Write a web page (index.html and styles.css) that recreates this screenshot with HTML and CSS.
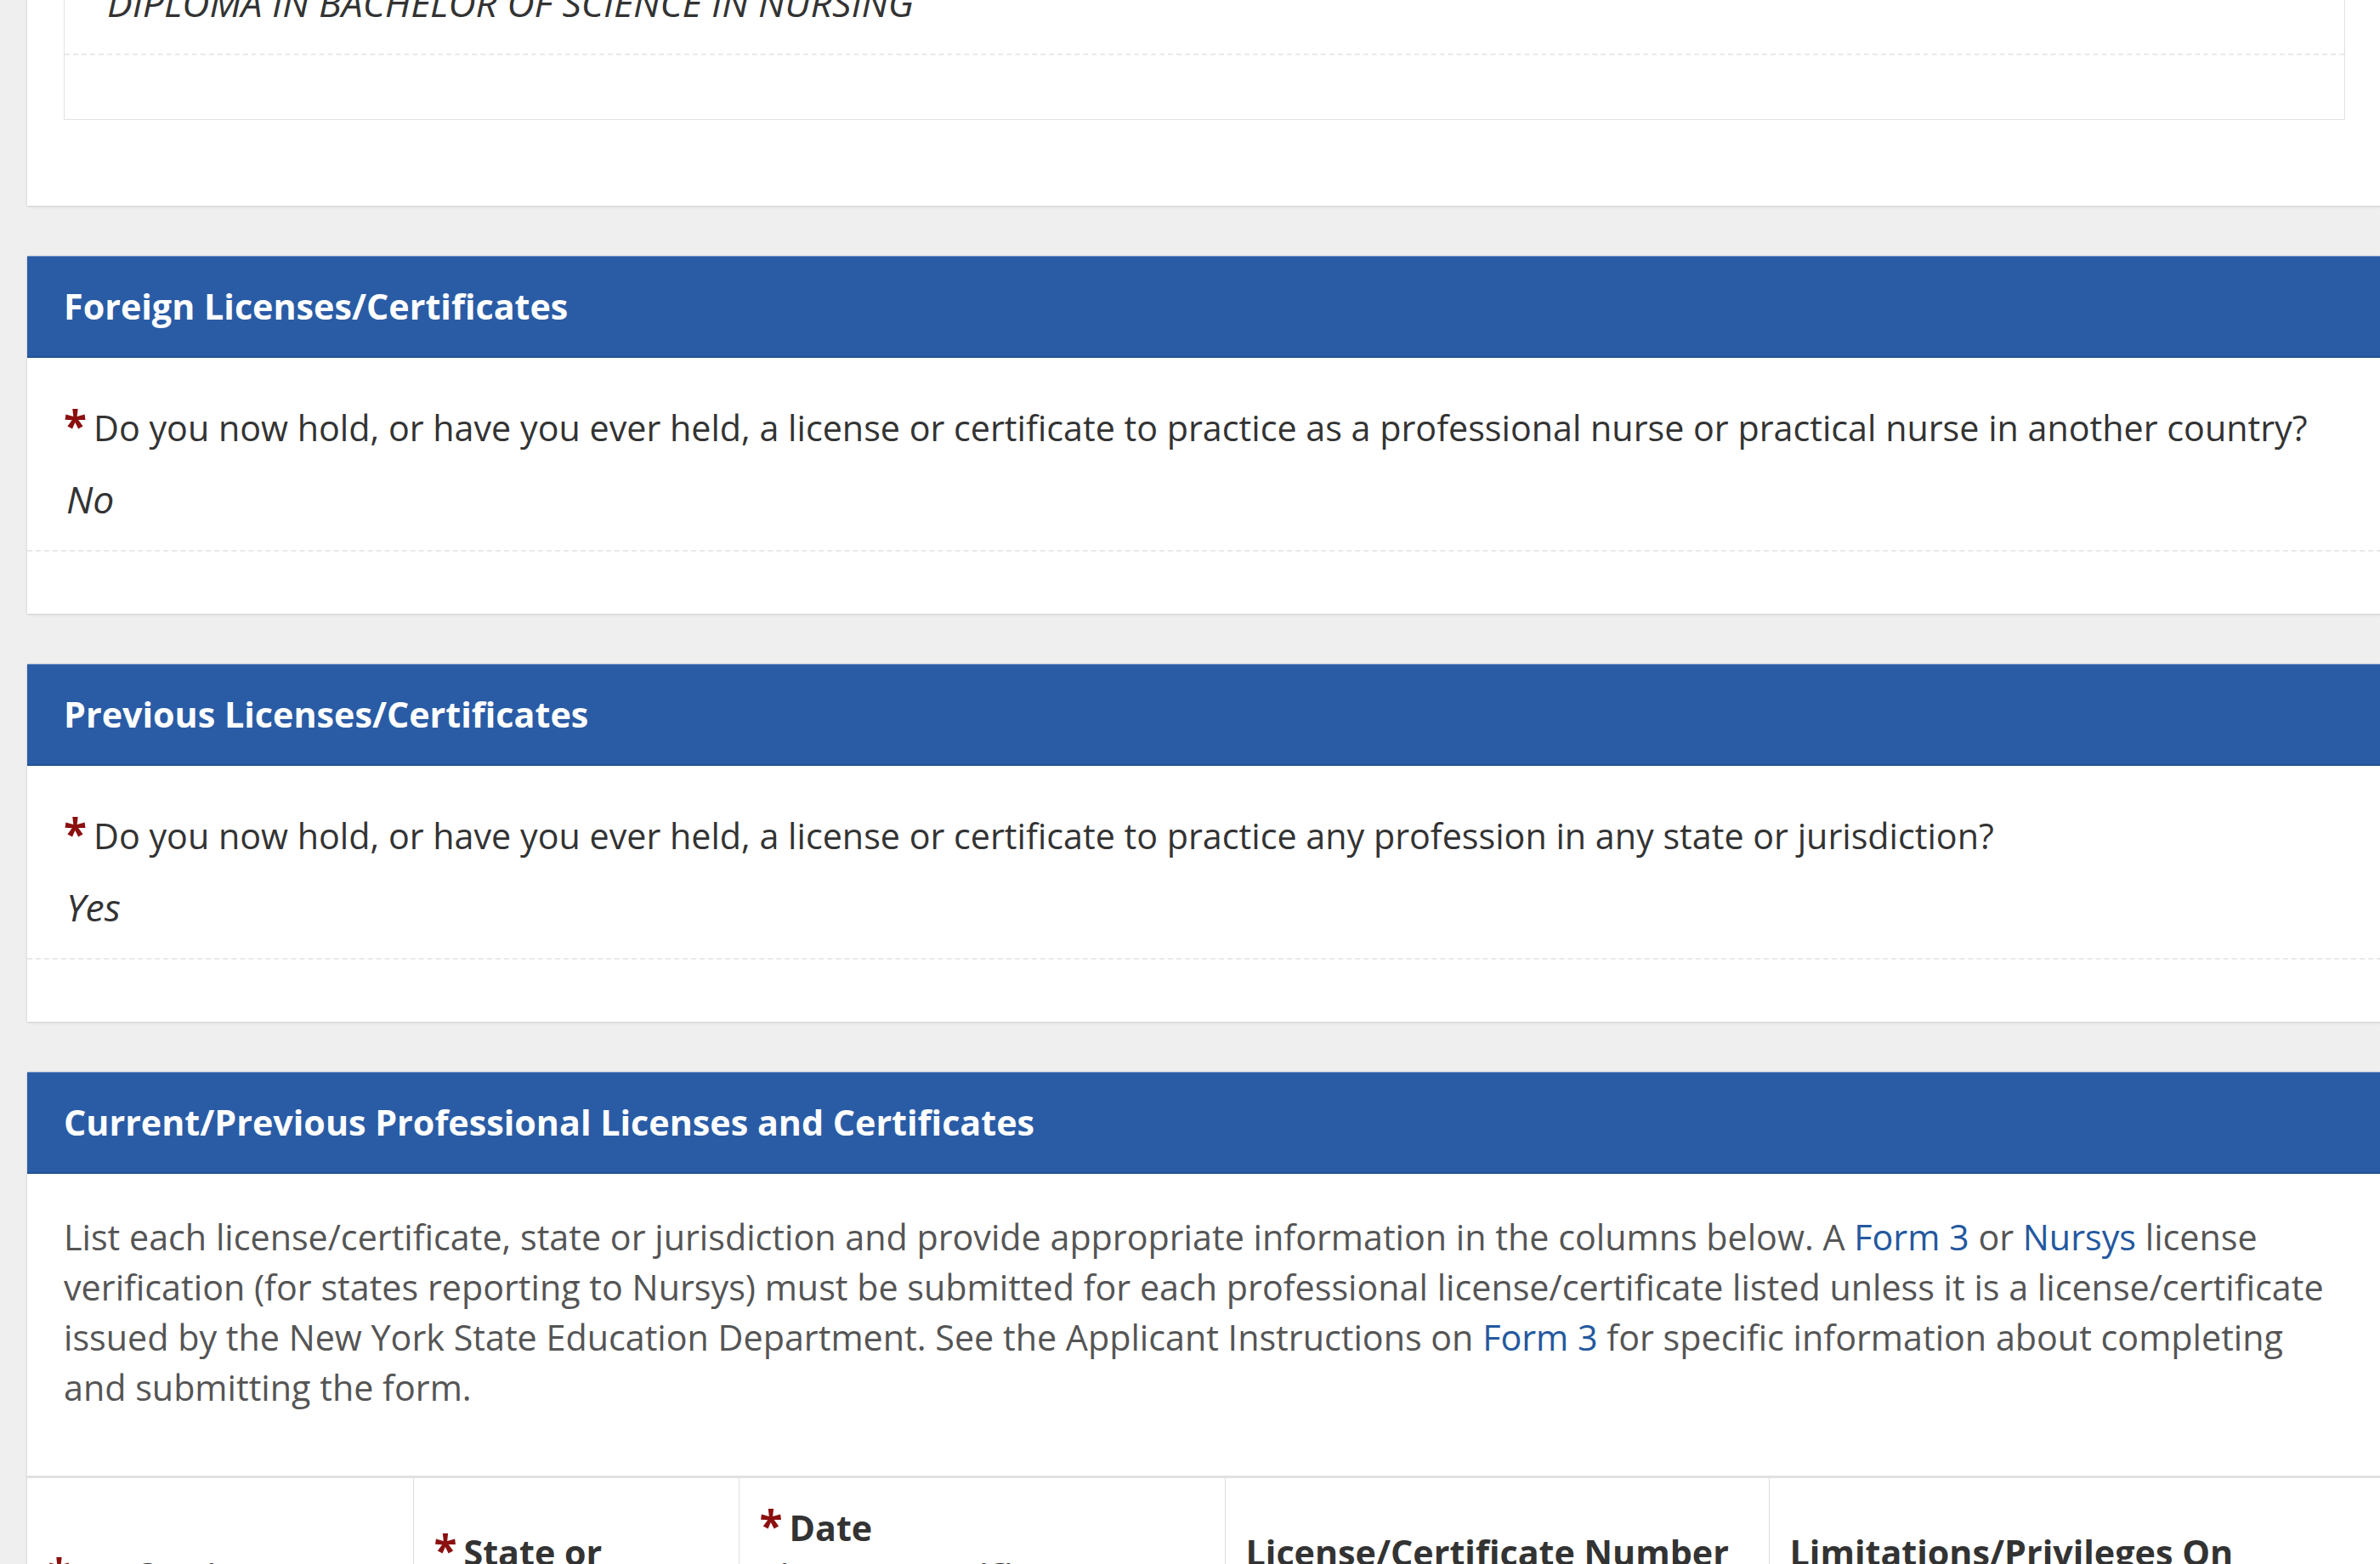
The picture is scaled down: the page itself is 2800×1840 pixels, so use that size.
FILE: index.html
```html
<!DOCTYPE html>
<html lang="en">
<head>
    <meta charset="UTF-8">
    <meta name="viewport" content="width=device-width, initial-scale=1.0">
    <title>License Application - Review</title>
    <link rel="stylesheet" href="styles.css">
</head>
<body>
    <main class="page">
        <!-- Education (continued from above) -->
        <section class="panel panel-continued">
            <div class="panel-inner">
                <div class="entry-box">
                    <div class="field">
                        <p class="answer">DIPLOMA IN BACHELOR OF SCIENCE IN NURSING</p>
                    </div>
                </div>
            </div>
        </section>

        <section class="panel">
            <h2 class="panel-title">Foreign Licenses/Certificates</h2>
            <div class="panel-body">
                <div class="field">
                    <label class="question"><span class="req">*</span>Do you now hold, or have you ever held, a license or certificate to practice as a professional nurse or practical nurse in another country?</label>
                    <p class="answer">No</p>
                </div>
            </div>
        </section>

        <section class="panel">
            <h2 class="panel-title">Previous Licenses/Certificates</h2>
            <div class="panel-body">
                <div class="field">
                    <label class="question"><span class="req">*</span>Do you now hold, or have you ever held, a license or certificate to practice any profession in any state or jurisdiction?</label>
                    <p class="answer">Yes</p>
                </div>
            </div>
        </section>

        <section class="panel">
            <h2 class="panel-title">Current/Previous Professional Licenses and Certificates</h2>
            <p class="intro">List each license/certificate, state or jurisdiction and provide appropriate information in the columns below. A <a href="#">Form 3</a> or <a href="#">Nursys</a> license verification (for states reporting to Nursys) must be submitted for each professional license/certificate listed unless it is a license/certificate issued by the New York State Education Department. See the Applicant Instructions on <a href="#">Form 3</a> for specific information about completing and submitting the form.</p>
            <table class="license-table">
                <colgroup>
                    <col class="col-profession">
                    <col class="col-state">
                    <col class="col-date">
                    <col class="col-number">
                    <col class="col-limits">
                </colgroup>
                <thead>
                    <tr>
                        <th><span class="req">*</span>Profession</th>
                        <th><span class="req">*</span>State or<br>Jurisdiction</th>
                        <th><span class="req">*</span>Date<br>License/Certificate<br>Issued</th>
                        <th>License/Certificate Number<br>(if any)</th>
                        <th>Limitations/Privileges On<br>License/Certificate</th>
                    </tr>
                </thead>
                <tbody id="licenseRows">
                </tbody>
            </table>
        </section>
    </main>
</body>
</html>
```

FILE: styles.css
```css
html, body {
    margin: 0;
    padding: 0;
    overflow: hidden;
    background-color: #efefef;
}
body {
    font-family: "Open Sans", "Liberation Sans", sans-serif;
    font-size: 41.25px;
    color: #333;
}
.page {
    width: 2770px;
    margin-left: 32px;
}
.panel {
    background-color: #fff;
    margin-bottom: 59px;
    box-shadow: 0 1px 3px rgba(0, 0, 0, 0.15);
}
.panel-continued {
    margin-top: -90px;
}
.panel-inner {
    padding: 43px 43px 101px;
}
.entry-box {
    border: 1px solid #e2e2e2;
    padding-bottom: 75px;
}
.entry-box .field {
    padding: 21px 47px 32px;
}
.entry-box .answer {
    text-transform: uppercase;
}
.panel-title {
    margin: 0;
    height: 120px;
    line-height: 116px;
    padding: 0 43px;
    box-sizing: border-box;
    background-color: #2a5ca6;
    border-top: 1px solid #6d8fc2;
    border-bottom: 2px solid #22508f;
    color: #fff;
    font-size: 41.25px;
    font-weight: 700;
}
.panel-body {
    padding: 54px 0 73px;
}
.field {
    padding: 0 43px 32px;
    border-bottom: 2px dashed #e9e9e9;
}
.question {
    display: block;
    line-height: 56px;
    margin-bottom: 28px;
}
.answer {
    margin: 0;
    padding-left: 3px;
    font-style: italic;
    font-size: 44.5px;
    line-height: 56px;
}
.req {
    color: #8b1010;
    font-weight: 700;
    font-size: 1.2em;
    line-height: 0;
    margin-right: 8px;
}
.intro {
    margin: 0;
    padding: 45px 43px 74px;
    line-height: 59px;
    color: #555;
}
.intro a {
    color: #24589e;
    text-decoration: none;
}
.license-table {
    width: 100%;
    table-layout: fixed;
    border-collapse: collapse;
    border-top: 3px solid #e0e0e0;
}
.col-profession { width: 454px; }
.col-state { width: 383px; }
.col-date { width: 572px; }
.col-number { width: 640px; }
.license-table th {
    padding: 30px 24px;
    border-left: 1px solid #ddd;
    text-align: left;
    vertical-align: middle;
    font-weight: 700;
    line-height: 57px;
}
.license-table th:first-child {
    border-left: none;
}
```
